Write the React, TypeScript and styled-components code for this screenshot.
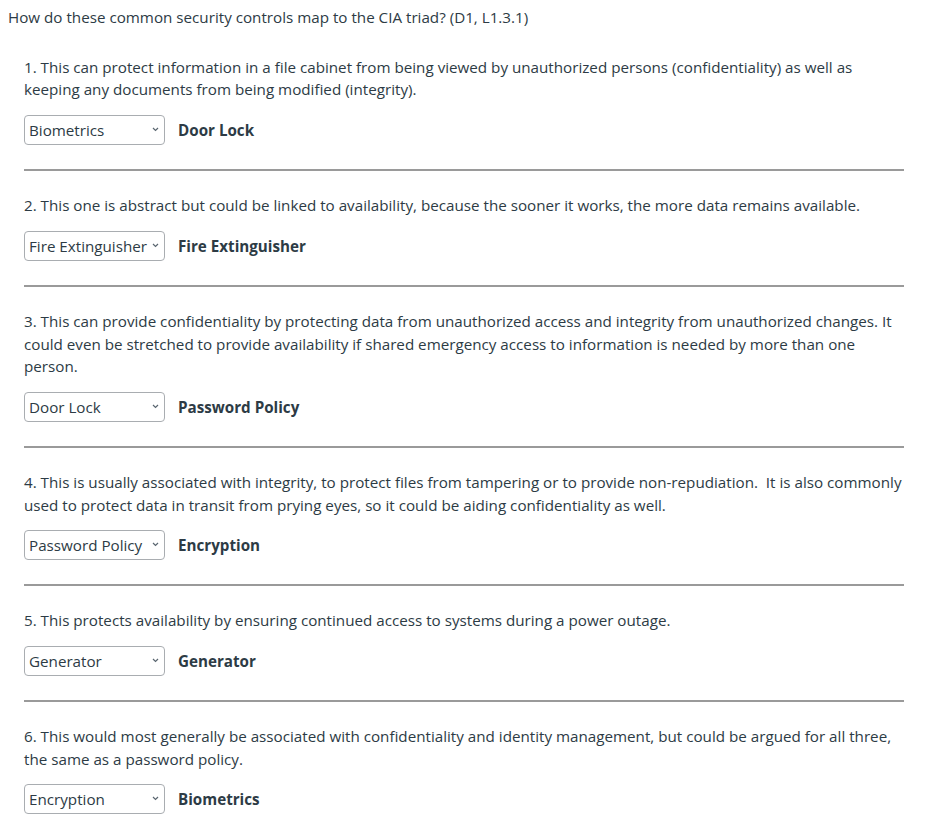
import React from "react";
import styled, { createGlobalStyle } from "styled-components";

const Global = createGlobalStyle`
  html, body { margin: 0; padding: 0; background: #fff; }
  body { font-family: "Open Sans", "DejaVu Sans", sans-serif; color: #2d3b45; }
`;

const Page = styled.div`
  padding: 6px 8px 8px 8px;
  width: 948px;
  box-sizing: border-box;
`;

const Heading = styled.div`
  font-size: 15.2px;
  line-height: 22.5px;
`;

const List = styled.div`
  display: flex;
  flex-direction: column;
  padding-left: 16px;
  width: 896px;
  box-sizing: border-box;
  margin-top: 4px;
`;

const Item = styled.div`
  display: flex;
  flex-direction: column;
  padding-top: 23.4px;
`;

const Question = styled.p`
  margin: 0 0 14px;
  font-size: 15.2px;
  line-height: 22.5px;
`;

const Row = styled.div`
  display: flex;
  align-items: center;
  gap: 13px;
`;

const SelectWrap = styled.div`
  position: relative;
  width: 141px;
  height: 30px;
`;

const Select = styled.select`
  appearance: none;
  -webkit-appearance: none;
  width: 141px;
  height: 30px;
  box-sizing: border-box;
  border: 1px solid #a9adb1;
  border-radius: 4px;
  background: #fff;
  color: #2d3b45;
  font-family: "Open Sans", sans-serif;
  font-size: 15.2px;
  padding: 0 16px 0 4px;
  outline: none;
`;

const Chevron = styled.svg`
  position: absolute;
  right: 6px;
  top: 12px;
  width: 7px;
  height: 5px;
  pointer-events: none;
`;

const Answer = styled.span`
  font-weight: 700;
  font-size: 15.2px;
`;

const Rule = styled.hr<{ $last?: boolean }>`
  width: 100%;
  margin: 24px 0 0;
  border: none;
  border-top: 2px solid #9a9a9a;
  display: ${(p) => (p.$last ? "none" : "block")};
`;

const options = [
  "Biometrics",
  "Door Lock",
  "Encryption",
  "Fire Extinguisher",
  "Generator",
  "Password Policy",
];

const items = [
  {
    q: "1. This can protect information in a file cabinet from being viewed by unauthorized persons (confidentiality) as well as keeping any documents from being modified (integrity).",
    sel: "Biometrics",
    a: "Door Lock",
  },
  {
    q: "2. This one is abstract but could be linked to availability, because the sooner it works, the more data remains available.",
    sel: "Fire Extinguisher",
    a: "Fire Extinguisher",
  },
  {
    q: "3. This can provide confidentiality by protecting data from unauthorized access and integrity from unauthorized changes. It could even be stretched to provide availability if shared emergency access to information is needed by more than one person.",
    sel: "Door Lock",
    a: "Password Policy",
  },
  {
    q: "4. This is usually associated with integrity, to protect files from tampering or to provide non-repudiation.\u00a0 It is also commonly used to protect data in transit from prying eyes, so it could be aiding confidentiality as well.",
    sel: "Password Policy",
    a: "Encryption",
  },
  {
    q: "5. This protects availability by ensuring continued access to systems during a power outage.",
    sel: "Generator",
    a: "Generator",
  },
  {
    q: "6. This would most generally be associated with confidentiality and identity management, but could be argued for all three, the same as a password policy.",
    sel: "Encryption",
    a: "Biometrics",
  },
];

export default function App() {
  return (
    <Page>
      <Global />
      <Heading>How do these common security controls map to the CIA triad? (D1, L1.3.1)</Heading>
      <List>
        {items.map((it, i) => (
          <Item key={i}>
            <Question>{it.q}</Question>
            <Row>
              <SelectWrap>
                <Select defaultValue={it.sel}>
                  {options.map((o) => (
                    <option key={o} value={o}>
                      {o}
                    </option>
                  ))}
                </Select>
                <Chevron viewBox="0 0 7 5">
                  <path d="M1 1 L3.5 3.5 L6 1" fill="none" stroke="#5a6670" strokeWidth="1.2" />
                </Chevron>
              </SelectWrap>
              <Answer>{it.a}</Answer>
            </Row>
            <Rule $last={i === items.length - 1} />
          </Item>
        ))}
      </List>
    </Page>
  );
}
